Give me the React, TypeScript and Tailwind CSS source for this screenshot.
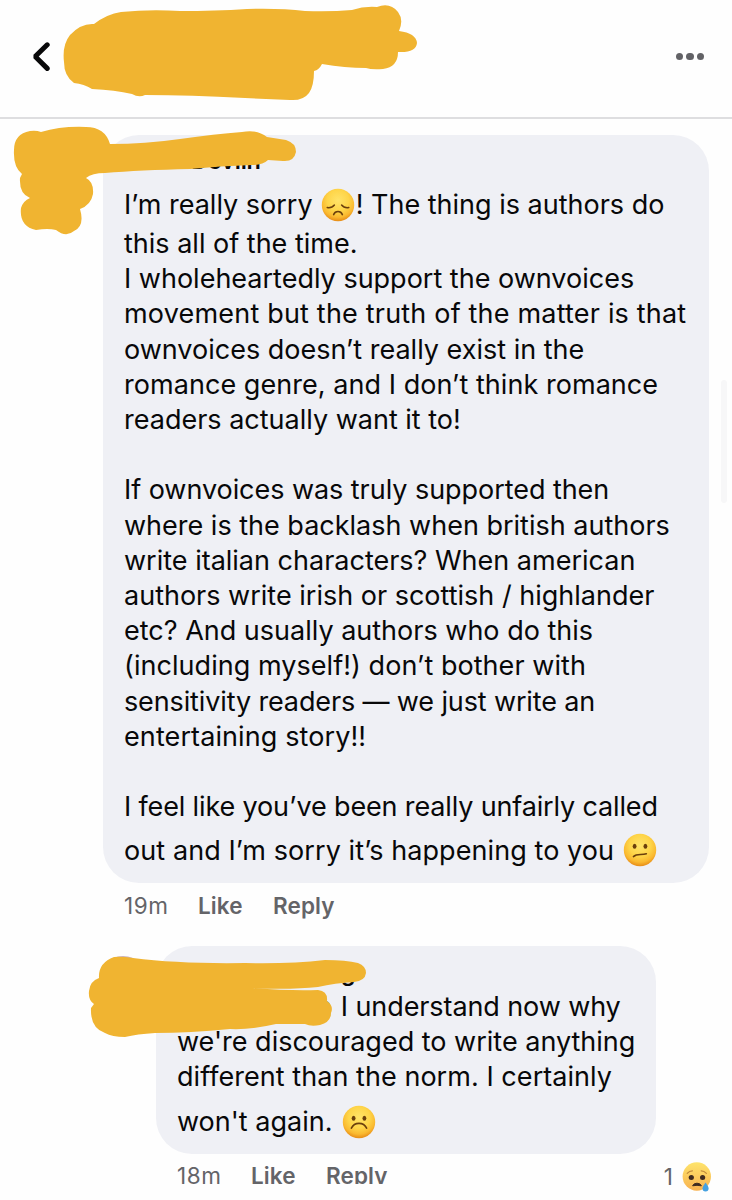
import React from 'react';

type Mood = 'sad' | 'confused' | 'frown';

interface FaceProps {
  mood: Mood;
  className?: string;
}

const Face: React.FC<FaceProps> = ({ mood, className = '' }) => {
  return (
    <svg viewBox="0 0 34 34" className={`inline-block h-[34px] w-[34px] shrink-0 ${className}`}>
      <defs>
        <radialGradient id={`face-${mood}`} cx="0.5" cy="0.36" r="0.66">
          <stop offset="0" stopColor="#ffe368" />
          <stop offset="0.5" stopColor="#fed549" />
          <stop offset="0.78" stopColor="#fab930" />
          <stop offset="1" stopColor="#e48512" />
        </radialGradient>
      </defs>
      <circle cx="17" cy="17" r="16.2" fill={`url(#face-${mood})`} />
      {mood === 'sad' && (
        <g fill="none" stroke="#6b3f0c" strokeWidth="1.5" strokeLinecap="round">
          <path d="M6.2 19.6Q10.8 20.4 13.4 17" />
          <path d="M27.8 19.6Q23.2 20.4 20.6 17" />
          <path d="M12.6 26.6C14.2 22.6 19.8 22.6 21.4 26.6" />
        </g>
      )}
      {mood !== 'sad' && (
        <g fill="#6b3f0c">
          <ellipse cx="11.6" cy="13.2" rx="1.9" ry="2.5" />
          <ellipse cx="22.4" cy="13.2" rx="1.9" ry="2.5" />
        </g>
      )}
      {mood === 'confused' && (
        <path d="M10.4 23.6C14 20.2 18.5 22.6 23.4 20.8" fill="none" stroke="#6b3f0c" strokeWidth="1.5" strokeLinecap="round" />
      )}
      {mood === 'frown' && (
        <path d="M9.4 23.2C12.4 16.8 21.6 16.8 24.6 23.2" fill="none" stroke="#6b3f0c" strokeWidth="1.6" strokeLinecap="round" />
      )}
    </svg>
  );
};

const TearReaction: React.FC = () => {
  return (
    <svg viewBox="0 0 30 30" className="h-[30px] w-[30px]">
      <defs>
        <linearGradient id="tear-face" x1="0" y1="0" x2="0" y2="1">
          <stop offset="0" stopColor="#fee46c" />
          <stop offset="1" stopColor="#f8b250" />
        </linearGradient>
      </defs>
      <circle cx="14.8" cy="14.5" r="14.2" fill="url(#tear-face)" />
      <ellipse cx="9.3" cy="15.6" rx="2.6" ry="2.5" fill="#3f2b20" />
      <ellipse cx="20.6" cy="15.6" rx="2.6" ry="2.5" fill="#3f2b20" />
      <path d="M5.2 11.4Q7.4 8.8 10.4 8.8M19.2 8.8Q22.2 8.8 24.4 11.4" fill="none" stroke="#c08a3c" strokeWidth="1.2" strokeLinecap="round" />
      <path d="M10.6 23.8Q11.6 21.2 15 21.2T19.4 23.8Q15 22.8 10.6 23.8Z" fill="#3f2b20" stroke="#3f2b20" />
      <path d="M23.6 20.4Q20.5 24.4 20.5 26.4A3 3 0 0 0 26.6 26.4Q26.6 24.4 23.6 20.4Z" fill="#45a1e0" />
    </svg>
  );
};

const Header: React.FC = () => {
  return (
    <header className="flex h-[119px] items-center justify-between border-b-2 border-[#dedee0] pr-7 pb-1 pl-[31px]">
      <svg viewBox="0 0 20 30" className="h-[30px] w-5">
        <path d="M16.2 2.8L4.2 14.5L16.2 26.4" fill="none" stroke="#080809" strokeWidth="5" strokeLinecap="round" strokeLinejoin="bevel" />
      </svg>
      <div className="flex gap-[3px]">
        <span className="h-[7.5px] w-[7.5px] rounded-full bg-[#626266]" />
        <span className="h-[7.5px] w-[7.5px] rounded-full bg-[#626266]" />
        <span className="h-[7.5px] w-[7.5px] rounded-full bg-[#626266]" />
      </div>
    </header>
  );
};

const Actions: React.FC<{ time: string }> = ({ time }) => {
  return (
    <div className="flex text-[22.5px] leading-[28px] tracking-[0.1px] text-[#646468]">
      <span className="w-[74px] tracking-[0.6px]">{time}</span>
      <span className="w-[75px] font-semibold">Like</span>
      <span className="font-semibold">Reply</span>
    </div>
  );
};

const App: React.FC = () => {
  return (
    <div className="relative h-[1200px] w-[732px] overflow-hidden bg-[#fefefe] font-['Inter',sans-serif] text-[#080809]">
      <Header />

      <main className="pt-4">
        <article className="ml-[103px] h-[748px] w-[606px] rounded-[36px] bg-[#eff0f5] pt-2.5 pl-[21px] text-[27px] leading-[35.2px] whitespace-nowrap">
          <p className="pl-[67px] text-[23.5px] leading-[32px] font-semibold tracking-[-0.2px]">Devlin</p>
          <p className="flex h-[49px] items-center pt-1.5">
            <span>I’m really sorry</span>
            <Face mood="sad" className="mr-px ml-2" />
            <span>! The thing is authors do</span>
          </p>
          <p>this all of the time.</p>
          <p>I wholeheartedly support the ownvoices</p>
          <p className="tracking-[0.19px]">movement but the truth of the matter is that</p>
          <p>ownvoices doesn’t really exist in the</p>
          <p className="tracking-[0.05px]">romance genre, and I don’t think romance</p>
          <p>readers actually want it to!</p>
          <p className="mt-[35.2px] tracking-[-0.05px]">If ownvoices was truly supported then</p>
          <p>where is the backlash when british authors</p>
          <p>write italian characters? When american</p>
          <p>authors write irish or scottish / highlander</p>
          <p>etc? And usually authors who do this</p>
          <p className="tracking-[0.05px]">(including myself!) don’t bother with</p>
          <p className="tracking-[-0.13px]">sensitivity readers — we just write an</p>
          <p className="tracking-[0.1px]">entertaining story!!</p>
          <p className="mt-[35.2px] tracking-[-0.15px]">I feel like you’ve been really unfairly called</p>
          <p className="flex h-[52px] items-center tracking-[0.08px]">
            <span>out and I’m sorry it’s happening to you</span>
            <Face mood="confused" className="ml-[9px]" />
          </p>
        </article>
        <div className="mt-[9px] ml-[124px]">
          <Actions time="19m" />
        </div>

        <article className="mt-[26px] ml-[156px] h-[208px] w-[500px] rounded-[36px] bg-[#eff0f5] pt-[11px] pl-[21px] text-[27px] leading-[35.2px] whitespace-nowrap">
          <p className="pl-[164px] text-[23px] leading-[32px] font-semibold">g</p>
          <p className="pl-[139px] tracking-[-0.1px]">
            <span className="text-[#1b74d8]">n</span>
            <span className="ml-[9px]">I understand now why</span>
          </p>
          <p>we're discouraged to write anything</p>
          <p className="tracking-[0.05px]">different than the norm. I certainly</p>
          <p className="flex h-[54px] items-center">
            <span>won't again.</span>
            <Face mood="frown" className="ml-2.5" />
          </p>
        </article>
        <div className="mt-[8px] ml-[177px]">
          <Actions time="18m" />
        </div>
      </main>

      {/* edge of the bottom bar, just over the last row */}
      <div className="absolute inset-x-0 top-[1184px] h-4 bg-[#fefefe]" />

      <div className="absolute top-[1160px] right-[20px] flex items-center gap-[9px] text-[22.5px] text-[#646468]">
        <span>1</span>
        <TearReaction />
      </div>

      <div className="absolute top-[380px] left-[721px] h-[123px] w-[6px] rounded-full bg-[#f7f7f8]" />

      {/* marker strokes over names and avatars */}
      <svg viewBox="0 0 732 1200" className="pointer-events-none absolute inset-0 h-[1200px] w-[732px]" fill="#f0b431">
        <ellipse cx="123" cy="962" rx="13" ry="6" fill="#c9b3c4" />
        <path d="M94 24Q107 14 121 12Q150 9 180 11Q215 11 247 9Q280 8 305 11Q330 12 352 10Q364 6 377 7Q390 2 398 12Q404 20 399 31Q416 33 417 43Q416 53 398 52Q398 67 383 69Q372 70 366 68Q345 68 322 64Q319 70 314 71Q314 86 309 93Q303 101 290 100L245 98Q190 95 145 95Q139 98 132 94Q115 90 92 89Q84 84 74 83Q64 76 64 62Q62 45 70 35Q81 23 94 24Z" />
        <path d="M14 150Q14 134 30 131Q36 130 41 132Q61 126 86 127Q105 127 110 144Q145 144 180 139Q215 134 242 132Q257 129 267 137L286 140Q296 143 296 152Q294 162 283 161L268 160Q263 165 252 165Q220 166 190 169Q140 170 105 173Q92 173 86 178Q94 182 93 194Q91 205 80 209Q85 226 74 231Q66 238 56 230Q48 228 36 230Q19 226 21 208Q23 201 30 198Q19 194 20 178L22 174Q13 167 14 150Z" />
        <path d="M114 957Q121 956 133 958Q180 964 245 963Q290 964 325 960Q346 960 358 963Q366 966 366 973Q365 981 354 982Q335 983 318 987Q290 990 250 988Q290 991 318 990Q328 991 327 1001Q334 1006 331 1013Q331 1022 320 1025Q311 1027 305 1024L276 1024Q250 1030 230 1029Q190 1033 155 1033Q137 1034 125 1037Q112 1037 105 1033Q90 1028 91 1008L94 1004Q88 1000 89 991Q90 981 99 978Q98 963 114 957Z" />
      </svg>
    </div>
  );
};

export default App;
